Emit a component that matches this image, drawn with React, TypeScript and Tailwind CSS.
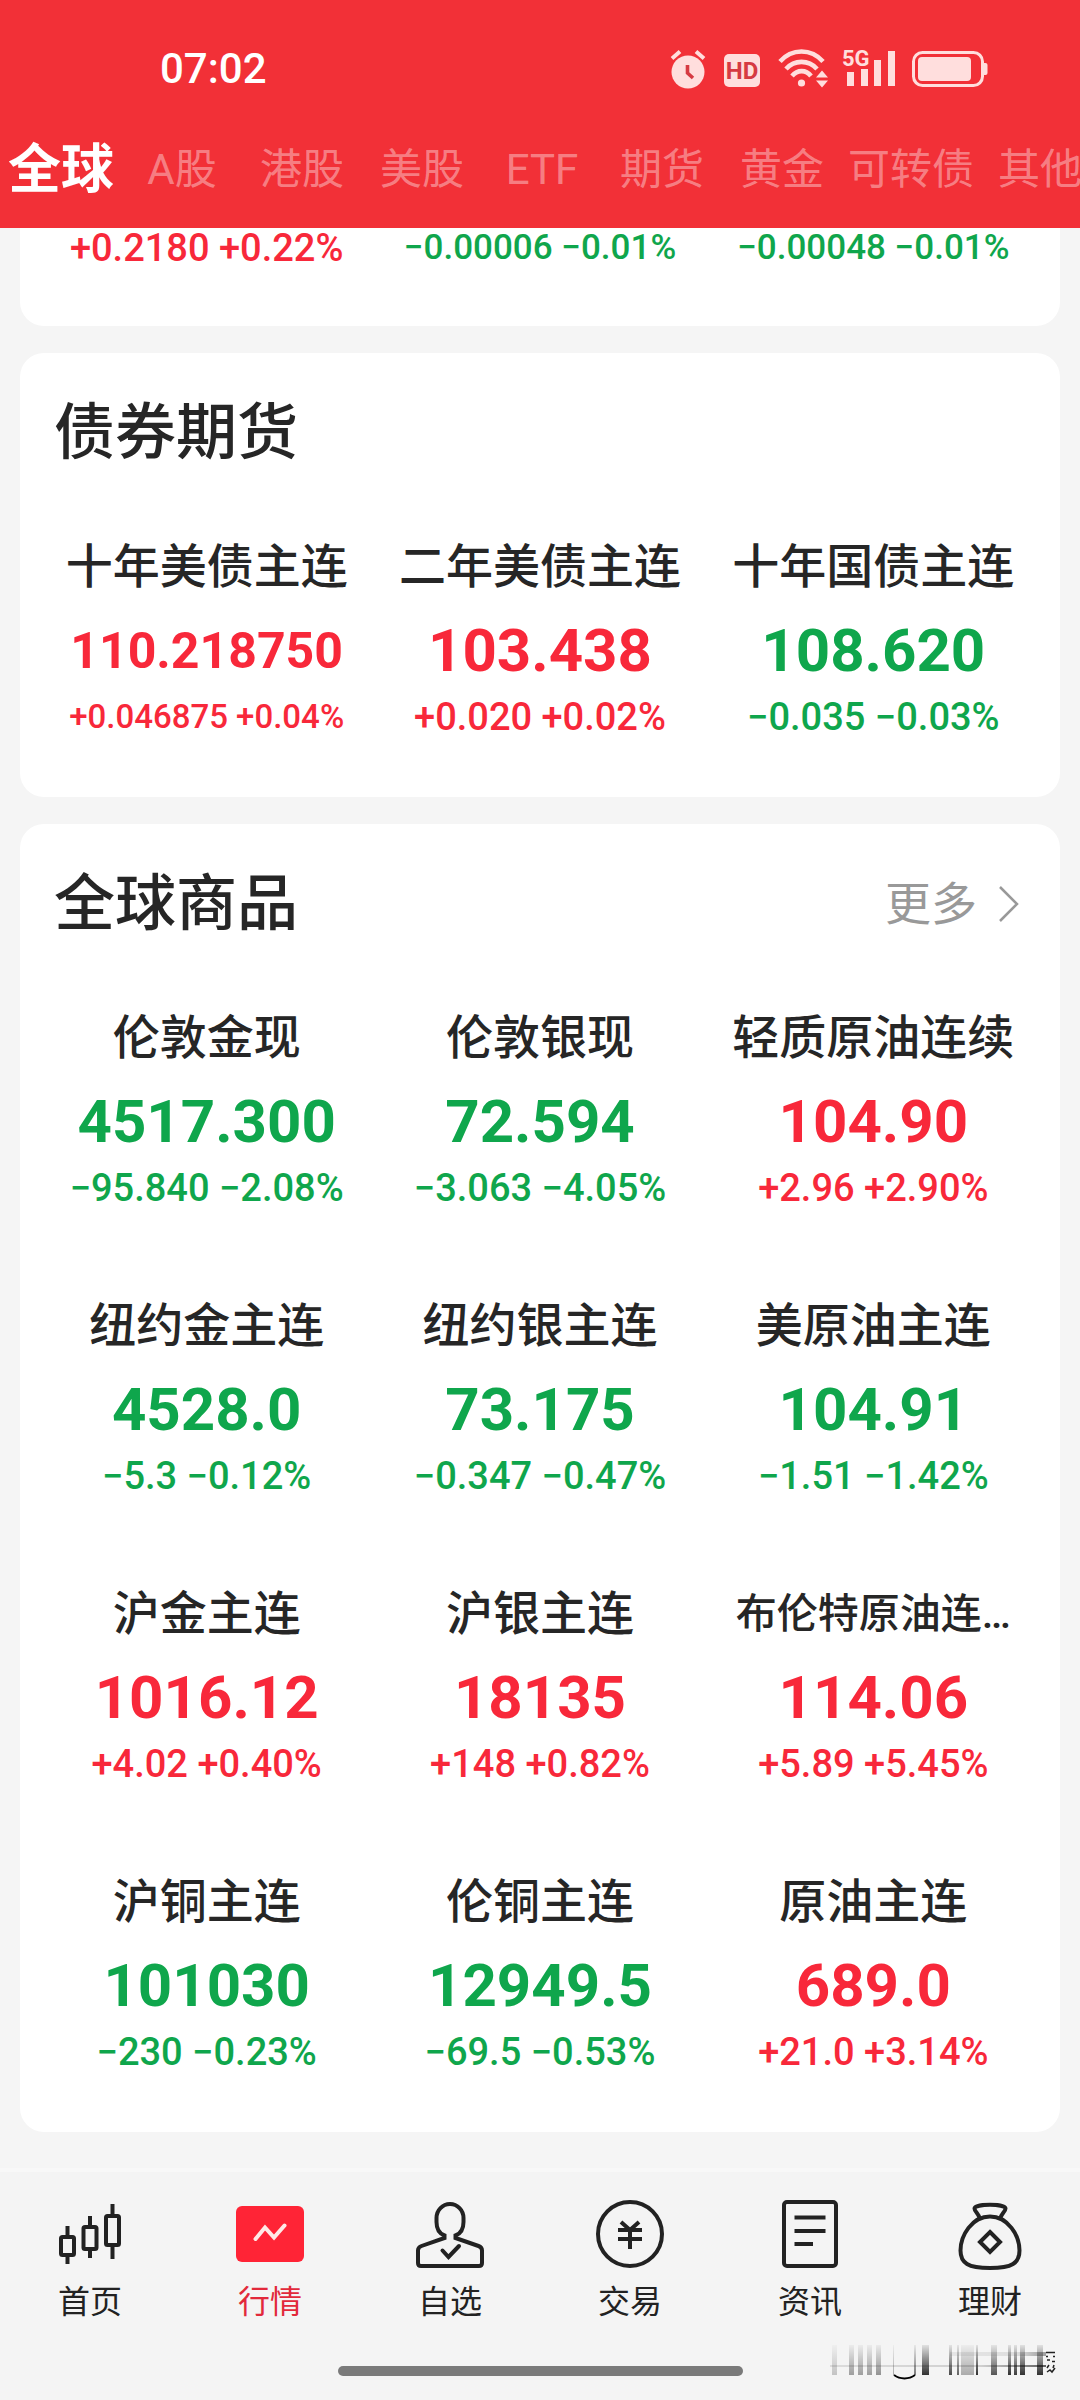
import type { ReactNode } from 'react';
import clsx from 'clsx';

type Quote = {
  name?: string;
  value?: string;
  change: string;
  up: boolean;
  size?: 'normal' | 'tight' | 'small';
};

const tabs = ['全球', 'A股', '港股', '美股', 'ETF', '期货', '黄金', '可转债', '其他'];

const forex: Quote[] = [
  { change: '+0.2180 +0.22%', up: true },
  { change: '−0.00006 −0.01%', up: false, size: 'tight' },
  { change: '−0.00048 −0.01%', up: false, size: 'tight' },
];

const bonds: Quote[] = [
  { name: '十年美债主连', value: '110.218750', change: '+0.046875 +0.04%', up: true, size: 'small' },
  { name: '二年美债主连', value: '103.438', change: '+0.020 +0.02%', up: true },
  { name: '十年国债主连', value: '108.620', change: '−0.035 −0.03%', up: false },
];

const commodities: Quote[] = [
  { name: '伦敦金现', value: '4517.300', change: '−95.840 −2.08%', up: false },
  { name: '伦敦银现', value: '72.594', change: '−3.063 −4.05%', up: false },
  { name: '轻质原油连续', value: '104.90', change: '+2.96 +2.90%', up: true },
  { name: '纽约金主连', value: '4528.0', change: '−5.3 −0.12%', up: false },
  { name: '纽约银主连', value: '73.175', change: '−0.347 −0.47%', up: false },
  { name: '美原油主连', value: '104.91', change: '−1.51 −1.42%', up: false },
  { name: '沪金主连', value: '1016.12', change: '+4.02 +0.40%', up: true },
  { name: '沪银主连', value: '18135', change: '+148 +0.82%', up: true },
  { name: '布伦特原油连…', value: '114.06', change: '+5.89 +5.45%', up: true },
  { name: '沪铜主连', value: '101030', change: '−230 −0.23%', up: false },
  { name: '伦铜主连', value: '12949.5', change: '−69.5 −0.53%', up: false },
  { name: '原油主连', value: '689.0', change: '+21.0 +3.14%', up: true },
];

function StatusBar() {
  return (
    <div className="flex h-[138px] items-center justify-between pl-[160px] pr-[92px]">
      <span className="text-[42px] leading-[48px] font-medium text-white">07:02</span>
      <div className="flex items-center text-[#ffdedd]">
        {/* alarm */}
        <svg className="h-10 w-9" viewBox="0 0 36 40" fill="none">
          <circle cx="18" cy="23" r="16.5" fill="currentColor" />
          <path d="M2 9.5 10 2.5M34 9.5 26 2.5" stroke="currentColor" strokeWidth="4" />
          <path d="M17.5 16v8l5.5 5" stroke="#d63a42" strokeWidth="3.6" />
        </svg>
        <svg className="ml-[18px] h-10 w-9" viewBox="0 0 36 40">
          <rect y="5" width="36" height="33" rx="5" fill="currentColor" />
          <text x="18" y="30" textAnchor="middle" fontSize="24" fontWeight="700" fill="#d63a42">
            HD
          </text>
        </svg>
        {/* wifi with traffic arrows */}
        <svg className="ml-[18px] h-10 w-[50px]" viewBox="0 0 50 40" fill="none">
          <g stroke="currentColor" strokeWidth="4.6">
            <path d="M2 12.5C14 -.8 33 -.8 45 12.5" />
            <path d="M8 20C16.5 10.5 30.5 10.5 39 20" />
            <path d="M14 27C19.5 20.5 28 20.5 33 27" />
          </g>
          <circle cx="23.5" cy="34" r="3.6" fill="currentColor" />
          <path d="M38 28.5h12l-6-7zM38 31.5h12l-6 7z" fill="currentColor" />
        </svg>
        <svg className="ml-[14px] h-10 w-[54px]" viewBox="0 0 54 40" fill="currentColor">
          <text x="0" y="17" fontSize="22" fontWeight="700">
            5G
          </text>
          <path d="M5 23h7v14H5zM19 20h7v17h-7zM32 11h7v26h-7zM46 2h7v35h-7z" />
        </svg>
        <svg className="ml-4 h-10 w-[76px]" viewBox="0 0 76 40" fill="none">
          <rect x="1.5" y="3.5" width="69" height="33" rx="9" stroke="currentColor" strokeWidth="3" />
          <rect x="6" y="8" width="53" height="24" rx="4" fill="currentColor" />
          <path d="M72 14h1.500a2 2 0 0 1 2 2v8a2 2 0 0 1-2 2H72z" fill="currentColor" />
        </svg>
      </div>
    </div>
  );
}

function MarketTabs() {
  return (
    <nav className="flex h-[90px] overflow-hidden pb-[26px]">
      {tabs.map((tab, i) => (
        <button
          key={tab}
          type="button"
          className={clsx(
            'shrink-0 whitespace-nowrap leading-[64px]',
            i === 0 ? 'px-2 text-[53px] font-bold text-white' : 'min-w-[120px] px-1.5 text-[42px] text-white/40',
          )}
        >
          {tab}
        </button>
      ))}
    </nav>
  );
}

function QuoteCell({ name, value, change, up, size = 'normal' }: Quote) {
  const long = name !== undefined && name.length > 6;
  return (
    <li className={clsx('text-center whitespace-nowrap', up ? 'text-[#f8283a]' : 'text-[#0fa64c]')}>
      {name && (
        <p className={clsx('leading-[60px] font-medium text-[#262626]', long ? 'text-[41px]' : 'text-[47px]')}>
          {name}
        </p>
      )}
      {value && (
        <p className={clsx('mt-[22px] leading-[64px] font-bold', size === 'small' ? 'text-[50px]' : 'text-[60px]')}>
          {value}
        </p>
      )}
      <p
        className={clsx(
          'leading-10 font-medium',
          value && 'mt-[14px]',
          size === 'normal' && 'text-[38px]',
          size === 'tight' && 'text-[35px]',
          size === 'small' && 'text-[33px]',
        )}
      >
        {change}
      </p>
    </li>
  );
}

function QuoteCard({ title, more, quotes }: { title: string; more?: boolean; quotes: Quote[] }) {
  return (
    <section className="rounded-3xl bg-white pt-[50px] pb-[60px]">
      <div className="mb-[74px] flex h-[60px] items-center justify-between pl-[34px] pr-[41px]">
        <h2 className="text-[61px] leading-[60px] font-medium text-[#262626]">{title}</h2>
        {more && (
          <a href="#more" className="flex items-center gap-[22px] text-[46px] leading-[60px] text-[#999999]">
            更多
            <svg className="h-9 w-5" viewBox="0 0 20 36" fill="none" stroke="currentColor" strokeWidth="2.5">
              <path d="M1 1 18 18 1 35" />
            </svg>
          </a>
        )}
      </div>
      <ul className="grid grid-cols-3 gap-y-[88px] px-5">
        {quotes.map((quote) => (
          <QuoteCell key={quote.name} {...quote} />
        ))}
      </ul>
    </section>
  );
}

function NavIcon({ children }: { children: ReactNode }) {
  return (
    <svg className="h-[72px] w-[72px]" viewBox="0 0 72 72" fill="none" stroke="currentColor" strokeWidth="4">
      {children}
    </svg>
  );
}

const navItems: { label: string; active?: boolean; icon: ReactNode }[] = [
  {
    label: '首页',
    icon: (
      <>
        <rect x="7" y="39" width="13" height="18" rx="1.5" />
        <path d="M13.5 28v11M13.5 57v9" />
        <rect x="29.5" y="29" width="13" height="22" rx="1.5" />
        <path d="M36 18v11M36 51v9" />
        <rect x="52" y="18" width="13" height="29" rx="1.5" />
        <path d="M58.5 6v12M58.5 47v14" />
      </>
    ),
  },
  {
    label: '行情',
    active: true,
    icon: (
      <>
        <rect x="2" y="8" width="68" height="56" rx="6" fill="#ff2436" stroke="none" />
        <path d="M21.5 41 31 29.5l9 10L50.5 27.5" stroke="#ffe9e6" strokeLinecap="round" />
      </>
    ),
  },
  {
    label: '自选',
    icon: (
      <>
        <path d="M30.5 40v-2.5C25 35.5 22.5 30 22.5 24v-4a13.5 14 0 0 1 27 0v4c0 6-2.5 11.5-8 13.5V40l23 8q3.5 1.3 3.5 4.5V65q0 3-3 3H7q-3 0-3-3V52.5Q4 49.3 7.5 48z" />
        <path d="m28.5 52.5 6 6.5L45 48" strokeLinecap="round" />
      </>
    ),
  },
  {
    label: '交易',
    icon: (
      <>
        <circle cx="36" cy="36" r="32" />
        <path d="m27 24 9 8 9-8M24 32h24M24 41h24M36 31v20" />
      </>
    ),
  },
  {
    label: '资讯',
    icon: (
      <>
        <rect x="10" y="4" width="52" height="64" rx="3" />
        <path d="M20.5 19.5h31M20.5 33h31M20.5 46h18.5" />
      </>
    ),
  },
  {
    label: '理财',
    icon: (
      <>
        <path d="M25.5 20c-.5-4-5-6.5-5-9.5 0-5 31-5 31 0 0 3-4.5 5.5-5 9.5" />
        <path d="M36 18.500c-18 0-29.5 19-29.5 34C6.5 65 14 70 36 70s29.5-5 29.5-17.500c0-15-11.500-34-29.500-34z" />
        <path d="m36 34 10 10-10 10-10-10z" />
      </>
    ),
  },
];

const smearBars = [
  { x: 2, w: 5, o: 0.2 },
  { x: 19, w: 5, o: 0.35 },
  { x: 28, w: 5, o: 0.35 },
  { x: 37, w: 5, o: 0.35 },
  { x: 46, w: 5, o: 0.4 },
  { x: 63, w: 1, o: 0.3 },
  { x: 84, w: 2, o: 0.5 },
  { x: 92, w: 7, o: 0.8 },
  { x: 119, w: 3, o: 0.7 },
  { x: 127, w: 2, o: 0.6 },
  { x: 131, w: 13, o: 0.3 },
  { x: 146, w: 2, o: 0.8 },
  { x: 161, w: 6, o: 0.65 },
  { x: 178, w: 3, o: 0.8 },
  { x: 184, w: 3, o: 0.75 },
  { x: 190, w: 5, o: 0.8 },
  { x: 207, w: 6, o: 0.8 },
];

function Watermark() {
  return (
    <svg className="absolute right-6 bottom-5 h-[35px] w-[226px]" viewBox="0 0 226 35" fill="none">
      <defs>
        <linearGradient id="fadeDown" x1="0" y1="0" x2="0" y2="1">
          <stop offset="0" stopColor="#000" stopOpacity="0.1" />
          <stop offset="1" stopColor="#000" />
        </linearGradient>
        <linearGradient id="fadeRight" x1="0" y1="0" x2="1" y2="0">
          <stop offset="0" stopColor="#000" stopOpacity="0.1" />
          <stop offset="0.7" stopColor="#000" stopOpacity="0.15" />
          <stop offset="1" stopColor="#000" stopOpacity="0.6" />
        </linearGradient>
      </defs>
      {smearBars.map((bar) => (
        <rect key={bar.x} x={bar.x} width={bar.w} height="30" fill="url(#fadeDown)" opacity={bar.o} />
      ))}
      <rect y="20" width="216" height="2" fill="url(#fadeRight)" />
      <rect x="120" y="7" width="96" height="4" fill="url(#fadeRight)" opacity="0.6" />
      <path d="M64 30c6 4.5 15 4.5 21 0" stroke="#000" strokeWidth="2" />
      <path
        d="M216 7.500h9M216 11.500h2M223 11.500h2M217 15h3M222 16.500h3M219 20l-2 3M224 20l-1 3M217 27l3-2 2 2 3-4"
        stroke="#222"
        strokeWidth="1.5"
      />
    </svg>
  );
}

function BottomNav() {
  return (
    <footer className="relative border-t-4 border-[#f8f8f8] bg-[#f4f4f4] pt-[26px] pb-6">
      <nav className="grid grid-cols-6">
        {navItems.map((item) => (
          <a
            key={item.label}
            href={`#${item.label}`}
            className={clsx(
              'flex flex-col items-center gap-3 text-[32px] leading-10',
              item.active ? 'text-[#e2293b]' : 'text-[#222222]',
            )}
          >
            <NavIcon>{item.icon}</NavIcon>
            {item.label}
          </a>
        ))}
      </nav>
      <div className="mx-auto mt-11 h-[10px] w-3/8 rounded-full bg-[#7a7a7a]" />
      <Watermark />
    </footer>
  );
}

export default function App() {
  return (
    <div className="flex min-h-screen flex-col bg-[#f5f5f5] font-[Roboto,'Noto_Sans_CJK_SC',sans-serif]">
      <header className="bg-[#f23037]">
        <StatusBar />
        <MarketTabs />
      </header>
      <main className="flex grow flex-col gap-[27px] px-5 pb-9">
        <section className="rounded-b-3xl bg-white px-5 pb-[58px]">
          <ul className="grid grid-cols-3">
            {forex.map((quote) => (
              <QuoteCell key={quote.change} {...quote} />
            ))}
          </ul>
        </section>
        <QuoteCard title="债券期货" quotes={bonds} />
        <QuoteCard title="全球商品" more quotes={commodities} />
      </main>
      <BottomNav />
    </div>
  );
}
